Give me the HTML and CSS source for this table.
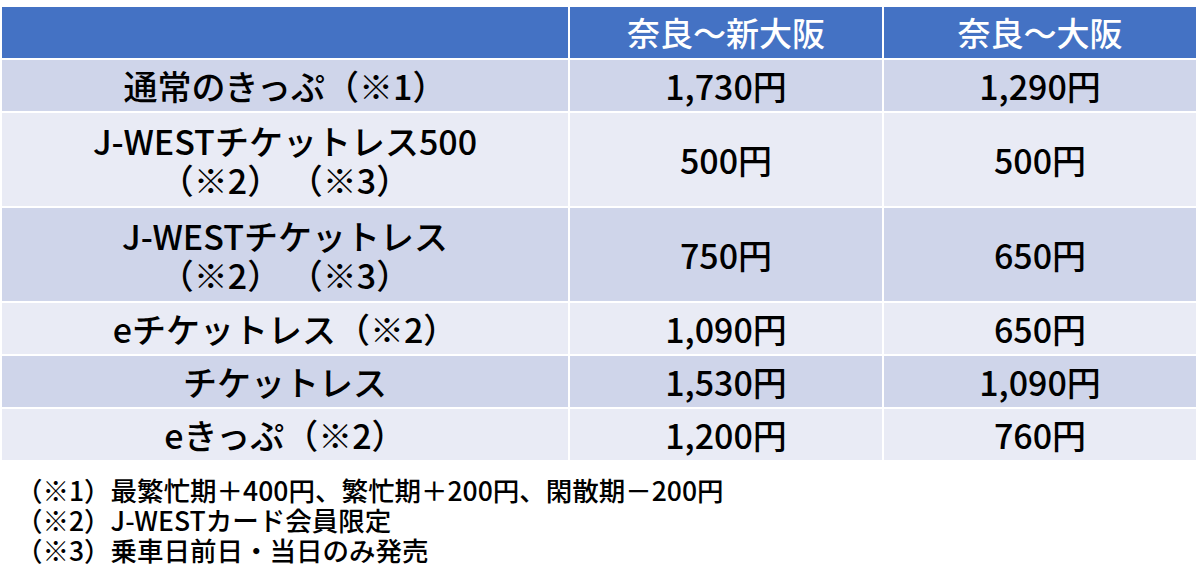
FILE: index.html
```html
<!DOCTYPE html>
<html lang="ja">
<head>
<meta charset="utf-8">
<link rel="stylesheet" href="styles.css">
</head>
<body>
<table class="fare">
  <thead>
    <tr class="head">
      <th class="c1"></th>
      <th>奈良～新大阪</th>
      <th>奈良～大阪</th>
    </tr>
  </thead>
  <tbody>
    <tr class="odd"><td>通常のきっぷ（※1）</td><td>1,730円</td><td>1,290円</td></tr>
    <tr class="even tall"><td>J-WESTチケットレス500<br>（※2） （※3）</td><td>500円</td><td>500円</td></tr>
    <tr class="odd tall"><td>J-WESTチケットレス<br>（※2） （※3）</td><td>750円</td><td>650円</td></tr>
    <tr class="even"><td>eチケットレス（※2）</td><td>1,090円</td><td>650円</td></tr>
    <tr class="odd"><td>チケットレス</td><td>1,530円</td><td>1,090円</td></tr>
    <tr class="even"><td>eきっぷ（※2）</td><td>1,200円</td><td>760円</td></tr>
  </tbody>
</table>
<div class="notes">
  <p>（※1）最繁忙期＋400円、繁忙期＋200円、閑散期－200円</p>
  <p>（※2）J-WESTカード会員限定</p>
  <p>（※3）乗車日前日・当日のみ発売</p>
</div>
</body>
</html>
```

FILE: styles.css
```css
html, body {
  margin: 0;
  padding: 0;
  background: #ffffff;
}
body {
  font-family: "Noto Sans CJK JP", "Noto Sans", sans-serif;
  color: #000000;
  width: 1200px;
  height: 585px;
  overflow: hidden;
}
.fare {
  border-collapse: separate;
  border-spacing: 2px;
  width: 1198px;
  margin-top: 5px;
  table-layout: fixed;
}
.fare th, .fare td {
  padding: 0;
  text-align: center;
  vertical-align: middle;
  font-size: 34px;
  font-weight: 500;
  line-height: 39px;
  height: 51px;
}
.fare th {
  width: 312px;
  font-size: 33px;
}
.fare th.c1 {
  width: 566px;
}
.head th {
  background: #4472c4;
  color: #ffffff;
}
.odd td {
  background: #cfd5ea;
}
.even td {
  background: #e9ebf5;
}
.tall td {
  height: 93px;
}
.notes {
  margin: 13px 0 0 16px;
}
.notes p {
  margin: 0;
  font-size: 26.5px;
  font-weight: 500;
  line-height: 30px;
}
```
